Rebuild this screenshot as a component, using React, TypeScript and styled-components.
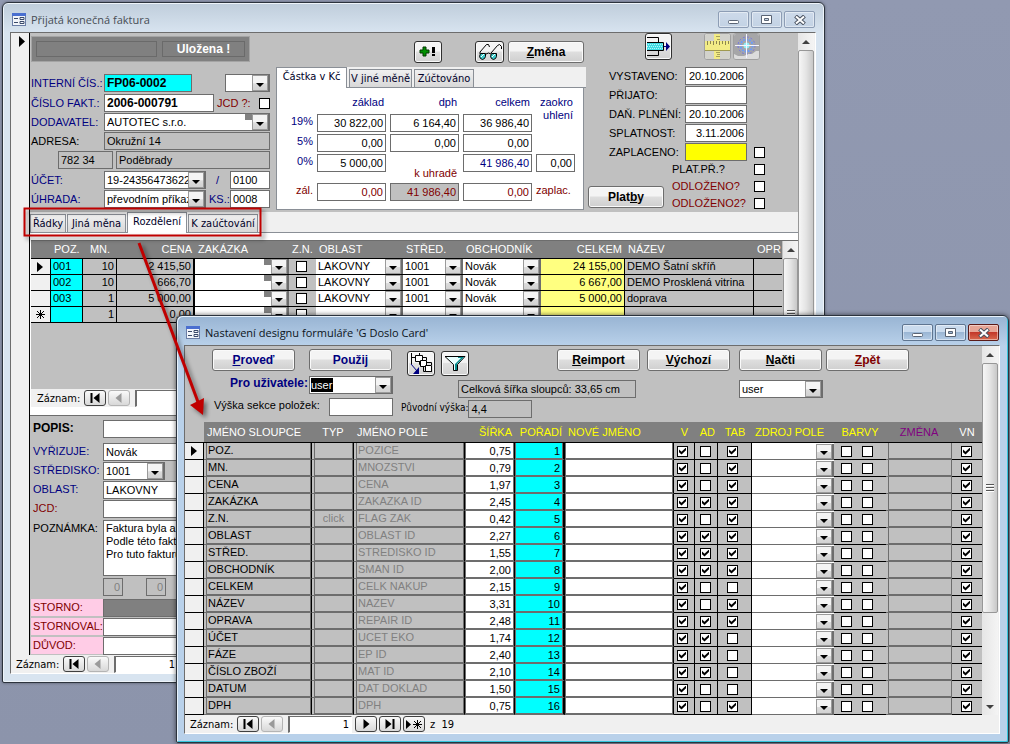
import React from 'react';
import styled, { createGlobalStyle, css } from 'styled-components';

const UI = '"Liberation Sans", Arial, sans-serif';
const TAHOMA = '"DejaVu Sans Condensed", "Noto Sans", sans-serif';
const TITLE = '"Open Sans", "Noto Sans", sans-serif';

const c = {
  face: '#c0c0c0',
  light: '#f0f0f0',
  line: '#6d6d6d',
  dark: '#808080',
  navy: '#000080',
  maroon: '#800000',
  purple: '#800080',
  cyan: '#00ffff',
  yellow: '#ffff00',
  paleYellow: '#ffff80',
  pink: '#ffcce6',
};

const GlobalStyle = createGlobalStyle`
  *, *::before, *::after { box-sizing: border-box; }
  body { margin: 0; background: #9199b1; font-family: ${UI}; font-size: 11px; line-height: 15px; color: #000; }
  input, select, textarea, button { font: inherit; color: inherit; margin: 0; border-radius: 0; }
`;

/* ---------- windows ---------- */

const Desktop = styled.main`
  position: relative;
  min-height: 100vh;
  overflow: hidden;
  background: linear-gradient(#9199b1, #8c94ab);
`;

const WindowFrame = styled.section<{ $active?: boolean }>`
  position: absolute;
  display: flex;
  flex-direction: column;
  border: 1px solid #2c333d;
  border-radius: 6px 6px 2px 2px;
  padding: 0 8px 8px 7px;
  ${(p) =>
    p.$active
      ? css`
          top: 315px;
          left: 176px;
          right: 1px;
          background: linear-gradient(#98b4d3, #b9d1ea 30px);
          box-shadow: inset 1px 1px 0 #e8f2fb, inset -1px -1px 0 #35c5dd, 0 0 5px rgba(0, 0, 0, 0.6);
        `
      : css`
          top: 2px;
          left: 2px;
          right: 185px;
          background: linear-gradient(#bfcddb, #d8e4f0 30px);
          box-shadow: inset 0 0 0 1px #eef4fa, 0 0 3px rgba(0, 0, 0, 0.4);
        `}
`;

const TitleBar = styled.header`
  display: flex;
  align-items: center;
  height: 29px;
  padding: 4px 1px 0 2px;
  gap: 5px;
`;

const Title = styled.h1<{ $active?: boolean }>`
  flex: 1;
  margin: 0;
  font: 400 11px/16px ${TITLE};
  color: ${(p) => (p.$active ? '#0c1420' : '#474d55')};
`;

const CaptionButtons = styled.div`
  display: flex;
  gap: 2px;
`;

const CaptionButton = styled.button<{ $tone: 'plain' | 'active' | 'close' }>`
  display: flex;
  align-items: center;
  justify-content: center;
  width: 31px;
  height: 17px;
  padding: 0;
  border-radius: 2px;
  border: 1px solid ${(p) => ({ plain: '#8d9db5', active: '#5f7590', close: '#5a1a18' })[p.$tone]};
  background: ${(p) =>
    ({
      plain: 'linear-gradient(#cddaea, #c3d2e4)',
      active: 'linear-gradient(#cadbee 45%, #9bb6d4 50%, #b4cce6)',
      close: 'linear-gradient(#e6a596 45%, #c3382a 50%, #d8694e)',
    })[p.$tone]};
  box-shadow: inset 0 0 0 1px rgba(255, 255, 255, 0.45);
`;

const Client = styled.div`
  display: flex;
  flex-direction: column;
  padding-right: 1px;
  border: 1px solid #fff;
  border-top-color: ${c.line};
  border-left-color: ${c.line};
  background: ${c.light};
`;

const FormArea = styled.div`
  display: flex;
  align-items: stretch;
`;

const RecordSelector = styled.div`
  flex: 0 0 19px;
  border-right: 1px solid #000;
  background: ${c.light};
  padding: 3px 0 0 8px;
`;

const FormBody = styled.div`
  flex: 1;
  min-width: 0;
  background: ${c.face};
`;

/* ---------- scroll bar ---------- */

const ScrollTrack = styled.div<{ $w: number }>`
  flex: 0 0 ${(p) => p.$w}px;
  display: flex;
  flex-direction: column;
  background: linear-gradient(90deg, #e6e6e6, #f4f4f4);
`;

const ScrollEnd = styled.div`
  height: 17px;
  display: flex;
  align-items: center;
  justify-content: center;
`;

const ScrollThumb = styled.div<{ $grow: number }>`
  flex: ${(p) => p.$grow} 1 0;
  display: flex;
  align-items: center;
  justify-content: center;
  border: 1px solid #979797;
  border-radius: 2px;
  background: linear-gradient(90deg, #f6f6f6, #e4e4e4 50%, #c8c8c8);
`;

const ScrollRest = styled.div<{ $grow: number }>`
  flex: ${(p) => p.$grow} 1 0;
`;

function ScrollBar({ thumb, rest, width = 16, grip = true }: { thumb: number; rest: number; width?: number; grip?: boolean }) {
  return (
    <ScrollTrack $w={width}>
      <ScrollEnd>
        <svg width="8" height="4"><path d="M0 4L4 0L8 4Z" fill="#404040" /></svg>
      </ScrollEnd>
      <ScrollThumb $grow={thumb}>
        {grip && (
          <svg width="8" height="9">
            <path d="M0 1.5H8M0 4.5H8M0 7.5H8" stroke="#555" />
            <path d="M0 2.5H8M0 5.5H8M0 8.5H8" stroke="#fff" />
          </svg>
        )}
      </ScrollThumb>
      <ScrollRest $grow={rest} />
      <ScrollEnd>
        <svg width="8" height="4"><path d="M0 0L4 4L8 0Z" fill="#404040" /></svg>
      </ScrollEnd>
    </ScrollTrack>
  );
}

/* ---------- controls ---------- */

type FieldProps = { $w?: number; $bg?: string; $color?: string; $right?: boolean; $bold?: boolean };

const fieldCss = css<FieldProps>`
  ${(p) => (p.$w ? `flex: 0 0 ${p.$w}px; width: ${p.$w}px;` : 'flex: 1; width: 100%;')}
  min-width: 0;
  height: 18px;
  padding: 0 2px;
  border: 1px solid ${c.line};
  background: ${(p) => p.$bg ?? '#fff'};
  color: ${(p) => p.$color ?? '#000'};
  text-align: ${(p) => (p.$right ? 'right' : 'left')};
  ${(p) => p.$bold && `font: 700 12px/15px ${UI};`}
`;

const Field = styled.input<FieldProps>`${fieldCss}`;

const Locked = styled.output<FieldProps>`
  ${fieldCss}
  display: block;
  line-height: 16px;
  white-space: nowrap;
  overflow: hidden;
`;

const Memo = styled.textarea`
  flex: 1;
  min-width: 0;
  height: 56px;
  padding: 1px 2px;
  border: 1px solid ${c.line};
  line-height: 13px;
  white-space: pre;
  resize: none;
  overflow: hidden;
`;

const Check = styled.input.attrs({ type: 'checkbox' })`
  appearance: none;
  flex: none;
  display: block;
  width: 11px;
  height: 11px;
  border: 1px solid #000;
  background: #fff;
  &:checked::after {
    content: '';
    display: block;
    width: 7px;
    height: 7px;
    margin: 1px;
    background: #000;
    clip-path: polygon(0 30%, 0 68%, 36% 100%, 100% 40%, 100% 0, 36% 60%);
  }
`;

const ComboBox = styled.span<{ $w?: number; $flat?: boolean }>`
  ${(p) => (p.$w ? `flex: 0 0 ${p.$w}px;` : 'flex: 1;')}
  display: flex;
  min-width: 0;
  height: ${(p) => (p.$flat ? 15 : 18)}px;
  border: 1px solid ${c.line};
  border-width: ${(p) => (p.$flat ? '0 2px 0 0' : '1px 2px 1px 1px')};
  background: #fff;
`;

const ComboSelect = styled.select`
  appearance: none;
  flex: 1;
  min-width: 0;
  width: 0;
  padding: 0 0 0 2px;
  border: 0;
  background: transparent;
  overflow: hidden;
`;

const ComboArrow = styled.span`
  flex: 0 0 16px;
  display: flex;
  align-items: center;
  justify-content: center;
  padding-top: 3px;
  border: 1px solid #fff;
  outline: 1px solid #9a9a9a;
  outline-offset: -1px;
  background: linear-gradient(#f4f4f4 50%, #dcdcdc 55%, #d2d2d2);
`;

const ComboMark = styled.span`
  flex: 0 0 7px;
  height: 6px;
  background: ${c.dark};
`;

const DownGlyph = () => (
  <svg width="8" height="4"><path d="M0 0H8L4 4Z" /></svg>
);

type ComboProps = { id?: string; label: string; value: string; width?: number; flat?: boolean; mark?: boolean };

function Combo({ id, label, value, width, flat, mark }: ComboProps) {
  return (
    <ComboBox $w={width} $flat={flat}>
      <ComboSelect id={id} aria-label={label} defaultValue={value}>
        <option>{value}</option>
      </ComboSelect>
      {mark && <ComboMark />}
      <ComboArrow><DownGlyph /></ComboArrow>
    </ComboBox>
  );
}

const HighlightInput = styled.input`
  flex: 0 0 22px;
  width: 22px;
  height: 14px;
  margin: 1px auto 0 1px;
  padding: 0;
  border: 0;
  background: #000;
  color: #fff;
`;

const PushButton = styled.button<{ $w: number; $color?: string }>`
  flex: 0 0 ${(p) => p.$w}px;
  height: 22px;
  padding: 0;
  border: 1px solid ${c.line};
  border-radius: 3px;
  background: linear-gradient(#f4f4f4 45%, #dedede 50%, #cfcfcf);
  box-shadow: inset 0 0 0 1px #fafafa;
  font: 700 12px/18px ${UI};
  color: ${(p) => p.$color ?? '#000'};
`;

const IconButton = styled.button<{ $w: number; $h: number; $off?: boolean }>`
  flex: 0 0 ${(p) => p.$w}px;
  height: ${(p) => p.$h}px;
  display: flex;
  align-items: center;
  justify-content: center;
  padding: 0;
  border: 1px solid ${(p) => (p.$off ? '#a0a0a0' : '#303030')};
  border-radius: 3px;
  background: linear-gradient(#f4f4f4 45%, #e0e0e0 50%, #d2d2d2);
  box-shadow: inset 0 0 0 1px #fafafa;
  overflow: hidden;
`;

/* ---------- record navigation ---------- */

const NavBar = styled.nav<{ $inset: number }>`
  display: flex;
  align-items: center;
  gap: 2px;
  height: 18px;
  padding-left: ${(p) => p.$inset}px;
  background: ${c.light};
  font: 11px/15px ${TAHOMA};
`;

const NavLabel = styled.label`
  width: 45px;
`;

const NavButton = styled.button<{ $off?: boolean }>`
  flex: 0 0 22px;
  height: 16px;
  display: flex;
  align-items: center;
  justify-content: center;
  padding: 0;
  border: 1px solid ${(p) => (p.$off ? '#b4b4b4' : '#404040')};
  border-radius: 3px;
  background: linear-gradient(#fafafa, #d8d8d8);
  color: ${(p) => (p.$off ? '#9a9a9a' : '#000')};
`;

const NavInput = styled.input`
  flex: 0 0 64px;
  width: 64px;
  height: 17px;
  margin: 0 1px 0 3px;
  padding: 0 2px;
  border: 1px solid #fff;
  border-top-color: ${c.line};
  border-left: 2px solid ${c.line};
  background: #fff;
  text-align: right;
`;

const NavTotal = styled.span`
  padding-left: 3px;
  white-space: pre;
`;

const navGlyph = {
  first: 'M1 0H3V10H1ZM10 0V10L4 5Z',
  prev: 'M8 0V10L2 5Z',
  next: 'M3 0V10L9 5Z',
  last: 'M1 0V10L7 5ZM8 0H10V10H8Z',
};

function NavGlyph({ d }: { d: string }) {
  return <svg width="12" height="10" viewBox="0 0 11 10"><path d={d} fill="currentColor" /></svg>;
}

function RecordNav({ id, inset, value, total }: { id: string; inset: number; value: string; total?: string }) {
  return (
    <NavBar $inset={inset} aria-label="Záznam">
      <NavLabel htmlFor={id}>Záznam:</NavLabel>
      <NavButton aria-label="První"><NavGlyph d={navGlyph.first} /></NavButton>
      <NavButton $off aria-label="Předchozí"><NavGlyph d={navGlyph.prev} /></NavButton>
      <NavInput id={id} defaultValue={value} />
      <NavButton aria-label="Další"><NavGlyph d={navGlyph.next} /></NavButton>
      <NavButton aria-label="Poslední"><NavGlyph d={navGlyph.last} /></NavButton>
      <NavButton aria-label="Nový">
        <svg width="17" height="9" viewBox="0 0 17 9">
          <path d="M0 0V9L5 4.5Z" />
          <path d="M11.5 0V9M7 4.5H16M8 1L15 8M15 1L8 8" stroke="#000" />
        </svg>
      </NavButton>
      {total && <NavTotal>{total}</NavTotal>}
    </NavBar>
  );
}

/* ---------- invoice header ---------- */

const InvoiceHeader = styled.div`
  display: flex;
  align-items: flex-start;
  height: 179px;
  background: ${c.face};
`;

const SupplierColumn = styled.div`
  flex: 0 0 240px;
  min-width: 0;
  padding: 3px 0 0 1px;
`;

const StatusPanel = styled.div`
  display: flex;
  gap: 5px;
  width: 219px;
  height: 26px;
  margin-bottom: 12px;
  padding: 4px;
  border: 1px solid #a4a4a4;
  background: ${c.dark};
`;

const StatusBox = styled.div<{ $w: number }>`
  flex: 0 0 ${(p) => p.$w}px;
  border: 1px solid #6a6a6a;
  color: #fff;
  text-align: center;
  font: 700 12px/14px ${UI};
`;

const Line = styled.div<{ $gap?: number }>`
  display: flex;
  align-items: center;
  gap: 3px;
  height: 18px;
  margin-bottom: ${(p) => p.$gap ?? 1}px;
`;

const Label = styled.label<{ $w?: number; $color?: string; $bold?: boolean }>`
  ${(p) => p.$w && `flex: 0 0 ${p.$w}px; min-width: 0;`}
  white-space: nowrap;
  color: ${(p) => p.$color ?? '#000'};
  ${(p) => p.$bold && `font: 700 12px/15px ${UI};`}
`;

const Spacer = styled.span<{ $w?: number }>`
  flex: ${(p) => (p.$w ? `0 0 ${p.$w}px` : '1')};
`;

const AmountColumn = styled.div`
  flex: 0 0 310px;
  min-width: 0;
  margin-left: 6px;
  padding-top: 8px;
`;

const ButtonRow = styled.div`
  display: flex;
  gap: 4px;
  height: 22px;
  margin-bottom: 4px;
  padding: 0 2px 0 138px;
`;

const TabStrip = styled.div<{ $h: number }>`
  display: flex;
  align-items: flex-end;
  gap: 2px;
  height: ${(p) => p.$h}px;
  border-bottom: 1px solid #8a8f96;
  background: ${c.light};
`;

const Tab = styled.button<{ $on?: boolean; $w: number }>`
  flex: 0 0 ${(p) => p.$w}px;
  height: ${(p) => (p.$on ? 21 : 18)}px;
  margin-bottom: ${(p) => (p.$on ? -1 : 0)}px;
  padding: 0 0 ${(p) => (p.$on ? 3 : 0)}px;
  border: 1px solid #8a8f96;
  border-bottom: 0;
  background: ${(p) => (p.$on ? '#fff' : 'linear-gradient(#f0f0f0, #d8d8d8)')};
  font: 11px/15px ${TAHOMA};
  color: #000028;
  white-space: nowrap;
`;

const FormTabs = styled(TabStrip)`
  gap: 1px;
`;

const AmountPanel = styled.div`
  display: grid;
  grid-template-columns: 36px repeat(3, 69px) 39px;
  grid-template-rows: 26px 18px 2px 18px 2px 18px 11px 18px;
  column-gap: 4px;
  height: 122px;
  margin-right: 2px;
  border: 1px solid #8a8f96;
  border-top: 0;
  background: #fff;
`;

const AmountHead = styled.span<{ $col: number }>`
  grid-area: 1 / ${(p) => p.$col};
  align-self: center;
  padding: 2px 2px 0 0;
  text-align: right;
  color: ${c.navy};
`;

const RoundingHead = styled.span`
  grid-area: 1 / 5 / 3 / 6;
  padding: 8px 2px 0 0;
  line-height: 13px;
  text-align: right;
  color: ${c.navy};
`;

const RateLabel = styled.span<{ $row: number; $color: string }>`
  grid-area: ${(p) => p.$row} / 1;
  text-align: right;
  color: ${(p) => p.$color};
`;

const ToPayLabel = styled.span`
  grid-area: 6 / 3 / 8 / 4;
  align-self: end;
  padding: 0 2px 2px;
  text-align: right;
  color: ${c.maroon};
`;

const PaidLabel = styled.span`
  grid-area: 8 / 5;
  color: ${c.maroon};
`;

const Amount = styled(Locked)<{ $row: number; $col: number }>`
  grid-area: ${(p) => p.$row} / ${(p) => p.$col};
`;

const DateColumn = styled.div`
  flex: 1;
  min-width: 0;
  padding-left: 2px;
`;

const ToolRow = styled.div`
  display: flex;
  gap: 2px;
  height: 27px;
  margin-bottom: 7px;
  padding-left: 57px;
`;

const DateLine = styled(Line)`
  padding-left: 21px;
  gap: 0;
`;

const PaymentArea = styled.div`
  display: flex;
  align-items: flex-end;
`;

const FlagList = styled.div`
  display: flex;
  flex-direction: column;
  padding-left: 8px;
`;

const Flag = styled.label<{ $color: string }>`
  display: flex;
  align-items: center;
  justify-content: space-between;
  width: 93px;
  height: 17px;
  color: ${(p) => p.$color};
`;

const PaymentButtonWrap = styled.div`
  display: flex;
  width: 76px;
  padding-bottom: 4px;
`;

/* ---------- invoice lines ---------- */

const TabPage = styled.div`
  padding: 7px 0 8px 1px;
  border-bottom: 1px solid ${c.line};
  background: #fff;
`;

const SubForm = styled.div`
  display: flex;
  height: 149px;
  border-top: 1px solid ${c.line};
  background: ${c.face};
`;

const GridHolder = styled.div`
  flex: 1;
  min-width: 0;
  margin-right: 1px;
`;

const Grid = styled.table`
  width: 100%;
  table-layout: fixed;
  border-collapse: separate;
  border-spacing: 0;
`;

const Th = styled.th<{ $color?: string; $align?: string; $bare?: boolean; $h: number }>`
  height: ${(p) => p.$h}px;
  padding: 0 3px;
  border-bottom: 1px solid #000;
  background: ${(p) => (p.$bare ? c.face : c.dark)};
  color: ${(p) => p.$color ?? '#fff'};
  font-weight: 400;
  text-align: ${(p) => p.$align ?? 'left'};
  white-space: nowrap;
  overflow: hidden;
`;

const Td = styled.td<{ $bg?: string; $h: number; $edge?: string; $align?: string; $color?: string; $under?: string }>`
  height: ${(p) => p.$h}px;
  padding: 0 2px;
  border-bottom: 1px solid ${(p) => p.$under ?? '#000'};
  border-right: ${(p) => p.$edge ?? '0'};
  background: ${(p) => p.$bg ?? c.face};
  color: ${(p) => p.$color ?? '#000'};
  text-align: ${(p) => p.$align ?? 'left'};
  line-height: ${(p) => p.$h - 1}px;
  white-space: nowrap;
  overflow: hidden;
`;

const FlushTd = styled(Td)`
  padding: 0;
`;

const MarkerTd = styled(Td)`
  line-height: 0;
`;

const CheckPair = styled.div<{ $left?: number }>`
  display: flex;
  gap: 10px;
  padding-left: ${(p) => p.$left ?? 7}px;
`;

const CellInput = styled.input<{ $bg?: string; $right?: boolean; $framed?: boolean }>`
  display: block;
  width: 100%;
  height: ${(p) => (p.$framed ? 16 : 15)}px;
  padding: 0 2px;
  border: 0 solid ${c.line};
  border-width: ${(p) => (p.$framed ? '0 1px 1px 1px' : '0')};
  background: ${(p) => p.$bg ?? 'transparent'};
  text-align: ${(p) => (p.$right ? 'right' : 'left')};
`;

const lineRows = [
  { poz: '001', mn: '10', cena: '2 415,50', celkem: '24 155,00', nazev: 'DEMO Šatní skříň' },
  { poz: '002', mn: '10', cena: '666,70', celkem: '6 667,00', nazev: 'DEMO Prosklená vitrina' },
  { poz: '003', mn: '1', cena: '5 000,00', celkem: '5 000,00', nazev: 'doprava' },
  { poz: '', mn: '1', cena: '0,00', celkem: '', nazev: '' },
];

const lineCols = [20, 32, 34, 78, 94, 27, 87, 60, 78, 84, 129];

function InvoiceLines() {
  const black = '1px solid #000';
  return (
    <Grid>
      <colgroup>
        {lineCols.map((w, i) => <col key={i} width={w} />)}
        <col />
      </colgroup>
      <thead>
        <tr>
          <Th $h={18} />
          <Th $h={18}>POZ.</Th>
          <Th $h={18} $align="center">MN.</Th>
          <Th $h={18} $align="right">CENA</Th>
          <Th $h={18}>ZAKÁZKA</Th>
          <Th $h={18}>Z.N.</Th>
          <Th $h={18}>OBLAST</Th>
          <Th $h={18}>STŘED.</Th>
          <Th $h={18}>OBCHODNÍK</Th>
          <Th $h={18} $align="right">CELKEM</Th>
          <Th $h={18}>NÁZEV</Th>
          <Th $h={18}>OPR</Th>
        </tr>
      </thead>
      <tbody>
        {lineRows.map((r, i) => (
          <tr key={i}>
            <MarkerTd $h={16} $bg={c.light} $edge={black} $align="center">
              {i === 0 && <svg width="7" height="10"><path d="M0 0V10L6 5Z" /></svg>}
              {i === 3 && (
                <svg width="9" height="9"><path d="M4.5 0V9M0 4.5H9M1 1L8 8M8 1L1 8" stroke="#000" /></svg>
              )}
            </MarkerTd>
            <FlushTd $h={16} $bg={c.cyan} $edge={black}>
              <CellInput aria-label="Pozice" defaultValue={r.poz} />
            </FlushTd>
            <Td $h={16} $edge={black} $align="right">{r.mn}</Td>
            <Td $h={16} $edge="2px solid #000" $align="right">{r.cena}</Td>
            <FlushTd $h={16} $bg="#fff">
              <Combo flat mark label="Zakázka" value="" />
            </FlushTd>
            <FlushTd $h={16}>
              <CheckPair><Check aria-label="Z.N." /></CheckPair>
            </FlushTd>
            <FlushTd $h={16}><Combo flat label="Oblast" value={i < 3 ? 'LAKOVNY' : ''} /></FlushTd>
            <FlushTd $h={16}><Combo flat label="Středisko" value={i < 3 ? '1001' : ''} /></FlushTd>
            <FlushTd $h={16}><Combo flat label="Obchodník" value={i < 3 ? 'Novák' : ''} /></FlushTd>
            <Td $h={16} $bg={c.paleYellow} $edge={black} $align="right">{r.celkem}</Td>
            <Td $h={16} $edge={black}>{r.nazev}</Td>
            <Td $h={16} />
          </tr>
        ))}
      </tbody>
    </Grid>
  );
}

/* ---------- invoice footer ---------- */

const InvoiceFooter = styled.div`
  padding: 4px 0 0 1px;
  background: ${c.face};
`;

const PinkLabel = styled(Label)`
  height: 17px;
  padding-left: 2px;
  background: ${c.pink};
  line-height: 17px;
`;

const FooterLine = styled(Line)`
  gap: 0;
  align-items: flex-start;
`;

const FooterLabel = styled(Label)`
  padding-left: 2px;
  line-height: 16px;
`;

const MemoLine = styled.div`
  display: flex;
  margin: 2px 0;
`;

/* ---------- icons ---------- */

function FormIcon() {
  return (
    <svg width="14" height="13" viewBox="0 0 14 13">
      <rect x="0.5" y="0.5" width="13" height="12" fill="#f2f5fa" stroke="#6b7ea6" />
      <rect x="0" y="0" width="14" height="3" fill="#4a6fd0" />
      <path d="M2 5.5H6M2 9.5H6" stroke="#3a4a6a" />
      <path d="M8 4.5H12V6.5H8ZM8 8.5H12V10.5H8Z" fill="none" stroke="#3a4a6a" />
    </svg>
  );
}

function Caption({ active }: { active?: boolean }) {
  const tone = active ? 'active' : 'plain';
  return (
    <CaptionButtons>
      <CaptionButton $tone={tone} aria-label="Minimalizovat">
        <svg width="12" height="10"><rect x="0.5" y="5.5" width="10" height="3" rx="1" fill="#fff" stroke="#5a6474" /></svg>
      </CaptionButton>
      <CaptionButton $tone={tone} aria-label="Maximalizovat">
        <svg width="11" height="9">
          <path d="M0.5 0.5H10.5V8.5H0.5ZM3.5 3.5V5.5H7.5V3.5Z" fill="#fff" fillRule="evenodd" stroke="#5a6474" />
        </svg>
      </CaptionButton>
      <CaptionButton $tone={active ? 'close' : 'plain'} aria-label="Zavřít">
        <svg width="12" height="10" viewBox="0 0 12 10">
          <path d="M1.5 1L10.5 9M10.5 1L1.5 9" stroke="#4a5260" strokeWidth="4" />
          <path d="M2 1.5L10 8.5M10 1.5L2 8.5" stroke="#fff" strokeWidth="2" />
        </svg>
      </CaptionButton>
    </CaptionButtons>
  );
}

const PlusIcon = () => (
  <svg width="18" height="12">
    <path d="M4 1H7V4H10V7H7V10H4V7H1V4H4Z" fill="#009000" stroke="#003800" />
    <path d="M13 1H16V7H13ZM13 8H16V10H13Z" />
  </svg>
);

const GlassesIcon = () => (
  <svg width="26" height="18" viewBox="0 0 26 18" fill="none" stroke="#000">
    <path d="M3 11V9L9.5 1.5L11.5 1.5L12.5 4M14 10L20.5 2.5L22.5 1.5L24.5 3.5V6" />
    <path d="M9 11Q11.5 9 14 11" />
    <path d="M3.5 10.5H8.5V13.5L7.5 15.5L5.5 16.5L3.5 15.5L2.5 13.5Z" fill="#3cc8c8" />
    <path d="M14.5 10.5H19.5V13.5L18.5 15.5L16.5 16.5L14.5 15.5L13.5 13.5Z" fill="#3cc8c8" />
    <path d="M4 14L7 11M15 14L18 11" stroke="#fff" />
  </svg>
);

const SplitIcon = () => (
  <svg width="25" height="23" viewBox="0 0 25 23">
    <path d="M1 2.5H12.5V8M1 20.5H12.5V15" fill="none" stroke="#000" />
    <rect x="1" y="8" width="16" height="7" fill="#40dce4" />
    <path d="M2 9.5H17M1 11.5H17M2 13.5H17" stroke="#b4f4f8" strokeDasharray="1 1" />
    <path d="M1 7.5H17.5V15.5H1" fill="none" stroke="#000" />
    <path d="M18 11H20V7L24 11.5L20 16V12H18Z" fill={c.navy} />
  </svg>
);

const RulerIcon = () => (
  <svg width="25" height="25" viewBox="0 0 25 25">
    <rect width="25" height="25" fill="#d2d2cc" />
    <path d="M9 0H15V25H9Z" fill="#f2ec86" />
    <path d="M11 2.5H15M12 5.5H15M11 18.5H15M12 20.5H15M11 22.5H15" stroke="#a8a25a" />
    <rect y="7" width="25" height="9" fill="#f2ec86" />
    <path d="M0 16.5H25" stroke="#a09a50" />
    <path d="M2.5 7V11M5.5 7V10M8.5 7V11M11.5 7V10M14.5 7V11M17.5 7V10M20.5 7V11M23.5 7V10" stroke="#8c8650" />
  </svg>
);

const StarIcon = () => (
  <svg width="25" height="25" viewBox="0 0 25 25">
    <rect width="25" height="25" fill="#a6a6a8" />
    <path d="M0 20L4 22H10L14 20H18L22 17H25V25H0Z" fill="#dcdcdc" />
    <circle cx="12.5" cy="11.5" r="8.5" fill="none" stroke="#7474e4" strokeDasharray="2 2" />
    <circle cx="12.5" cy="11.5" r="6" fill="none" stroke="#6c9cf8" strokeWidth="2" strokeDasharray="2 1" />
    <circle cx="12.5" cy="11.5" r="3" fill="#90f0f8" />
    <path d="M12.5 0V24M1 11.5H25" stroke="#f4f4ff" />
  </svg>
);

const CascadeIcon = () => (
  <svg width="24" height="22" viewBox="0 0 24 22" fill="none" stroke="#000">
    <path d="M2.5 0V11M2.5 4.5H6M10.5 0V2.5" />
    <path d="M6.5 2.5H13.5V8.5H6.5Z" fill="#fff" />
    <path d="M13.5 4.5H17.5V7M10.5 8.5V11.5H14" />
    <path d="M11.5 7.5H17.5V13.5H11.5Z" fill="#fff" />
    <path d="M17.5 9.5H22.5V12M14.5 13.5V18.5H23" />
    <path d="M16.5 12.5H22.5V18.5H16.5Z" fill="#fff" />
    <path d="M2 11L8 18" stroke={c.navy} />
    <path d="M10 14V21H4Z" fill={c.navy} stroke="none" />
  </svg>
);

const FunnelIcon = () => (
  <svg width="22" height="17" viewBox="0 0 22 17">
    <path d="M1 1.5H21L13.5 9.5V15.5H9.5V9.5Z" fill="#e8ffff" stroke="#000" />
    <path d="M14 2H20L13 9V15H11V9L17 3H14Z" fill="#008888" />
  </svg>
);

/* ---------- design dialog ---------- */

const DialogHead = styled.div`
  height: 76px;
  padding-top: 3px;
  background: ${c.face};
`;

const HeadRow = styled.div<{ $h: number; $left: number }>`
  display: flex;
  align-items: flex-start;
  height: ${(p) => p.$h}px;
  padding-left: ${(p) => p.$left}px;
`;

const Low = styled.div<{ $ml: number; $w: number }>`
  display: flex;
  align-self: flex-end;
  flex: 0 0 ${(p) => p.$w}px;
  margin-left: ${(p) => p.$ml}px;
`;

const SmallLabel = styled.span`
  flex: 0 0 67px;
  margin-left: 8px;
  font: 10px/20px ${TAHOMA};
  white-space: nowrap;
`;

const Boxed = styled.div<{ $color?: string; $align?: string }>`
  height: 16px;
  margin-left: 2px;
  padding: 0 1px;
  border: 1px solid ${c.line};
  border-top: 0;
  line-height: 15px;
  color: ${(p) => p.$color ?? '#000'};
  text-align: ${(p) => p.$align ?? 'left'};
`;

const columnRows: [string, string, string, string, boolean, boolean][] = [
  ['POZ.', '', 'POZICE', '0,75', false, true],
  ['MN.', '', 'MNOZSTVI', '0,79', false, true],
  ['CENA', '', 'CENA', '1,97', false, true],
  ['ZAKÁZKA', '', 'ZAKAZKA ID', '2,45', true, true],
  ['Z.N.', 'click', 'FLAG ZAK', '0,42', false, true],
  ['OBLAST', '', 'OBLAST ID', '2,27', true, true],
  ['STŘED.', '', 'STREDISKO ID', '1,55', true, true],
  ['OBCHODNÍK', '', 'SMAN ID', '2,00', true, true],
  ['CELKEM', '', 'CELK NAKUP', '2,15', false, false],
  ['NÁZEV', '', 'NAZEV', '3,31', false, true],
  ['OPRAVA', '', 'REPAIR ID', '2,48', true, true],
  ['ÚČET', '', 'UCET EKO', '1,74', true, false],
  ['FÁZE', '', 'EP ID', '2,40', true, false],
  ['ČÍSLO ZBOŽÍ', '', 'MAT ID', '2,10', true, false],
  ['DATUM', '', 'DAT DOKLAD', '1,50', false, false],
  ['DPH', '', 'DPH', '0,75', false, true],
];

const designCols = [19, 108, 42, 111, 50, 50, 109, 21, 23, 34, 82, 52, 66];

function DesignGrid() {
  const black = '1px solid #000';
  const thick = '2px solid #000';
  const h = 21;
  const yellow = c.yellow;
  return (
    <Grid>
      <colgroup>
        {designCols.map((w, i) => <col key={i} width={w} />)}
        <col />
      </colgroup>
      <thead>
        <tr>
          <Th $h={h} $bare />
          <Th $h={h}>JMÉNO SLOUPCE</Th>
          <Th $h={h} $align="center">TYP</Th>
          <Th $h={h}>JMÉNO POLE</Th>
          <Th $h={h} $color={yellow} $align="right">ŠÍŘKA</Th>
          <Th $h={h} $color={yellow} $align="right">POŘADÍ</Th>
          <Th $h={h} $color={yellow}>NOVÉ JMÉNO</Th>
          <Th $h={h} $color={yellow} $align="center">V</Th>
          <Th $h={h} $color={yellow} $align="right">AD</Th>
          <Th $h={h} $color={yellow} $align="center">TAB</Th>
          <Th $h={h} $color={yellow}>ZDROJ POLE</Th>
          <Th $h={h} $color={yellow} $align="center">BARVY</Th>
          <Th $h={h} $color={c.purple} $align="center">ZMĚNA</Th>
          <Th $h={h} $align="center">VN</Th>
        </tr>
      </thead>
      <tbody>
        {columnRows.map(([name, typ, field, width, ad, tab], i) => (
          <tr key={name}>
            <MarkerTd $h={17} $bg={c.light} $edge={black} $align="center">
              {i === 0 && <svg width="7" height="10"><path d="M0 0V10L6 5Z" /></svg>}
            </MarkerTd>
            <FlushTd $h={17} $edge={black} $under={c.line}><Boxed>{name}</Boxed></FlushTd>
            <FlushTd $h={17} $edge={black} $under={c.line}><Boxed $color={c.dark} $align="center">{typ}</Boxed></FlushTd>
            <FlushTd $h={17} $edge={black} $under={c.line}><Boxed $color={c.dark}>{field}</Boxed></FlushTd>
            <FlushTd $h={17} $edge={black} $under={c.line}>
              <CellInput $framed aria-label="Šířka" $bg="#fff" $right defaultValue={width} />
            </FlushTd>
            <FlushTd $h={17} $edge={thick} $under={c.line}>
              <CellInput $framed aria-label="Pořadí" $bg={c.cyan} $right defaultValue={i + 1} />
            </FlushTd>
            <FlushTd $h={17} $edge={black} $under={c.line}>
              <CellInput $framed aria-label="Nové jméno" $bg="#fff" />
            </FlushTd>
            <FlushTd $h={17} $edge={black}><CheckPair $left={3}><Check aria-label="V" defaultChecked /></CheckPair></FlushTd>
            <FlushTd $h={17} $edge={black}><CheckPair $left={5}><Check aria-label="AD" defaultChecked={ad} /></CheckPair></FlushTd>
            <FlushTd $h={17} $edge={black}><CheckPair $left={9}><Check aria-label="TAB" defaultChecked={tab} /></CheckPair></FlushTd>
            <FlushTd $h={17} $bg="#fff" $under={c.line}><Combo flat label="Zdroj pole" value="" /></FlushTd>
            <FlushTd $h={17}>
              <CheckPair><Check aria-label="Barva písma" /><Check aria-label="Barva pozadí" /></CheckPair>
            </FlushTd>
            <FlushTd $h={17} $under={c.line}><Boxed /></FlushTd>
            <FlushTd $h={17}><CheckPair $left={9}><Check aria-label="VN" defaultChecked /></CheckPair></FlushTd>
          </tr>
        ))}
      </tbody>
    </Grid>
  );
}

/* ---------- annotations drawn over both windows ---------- */

const Annotation = styled.svg`
  position: absolute;
  top: 200px;
  left: 16px;
  pointer-events: none;
  filter: drop-shadow(3px 3px 2px rgba(0, 0, 0, 0.45));
`;

function InvoiceWindow() {
  return (
    <WindowFrame>
      <TitleBar>
        <FormIcon />
        <Title>Přijatá konečná faktura</Title>
        <Caption />
      </TitleBar>
      <Client>
        <FormArea>
          <RecordSelector>
            <svg width="7" height="11"><path d="M0 0V11L6 5.5Z" /></svg>
          </RecordSelector>
          <FormBody>
            <InvoiceHeader>
              <SupplierColumn>
                <StatusPanel>
                  <StatusBox $w={121} />
                  <StatusBox $w={83}>Uložena !</StatusBox>
                </StatusPanel>
                <Line $gap={2}>
                  <Label $w={70} $color={c.navy} htmlFor="interni">INTERNÍ ČÍS.:</Label>
                  <Field id="interni" $w={88} $bg={c.cyan} $bold defaultValue="FP06-0002" />
                  <Spacer />
                  <Combo label="Řada" value="" width={45} />
                </Line>
                <Line>
                  <Label $w={70} $color={c.navy} htmlFor="cislo">ČÍSLO FAKT.:</Label>
                  <Field id="cislo" $w={110} $bold defaultValue="2006-000791" />
                  <Label $color={c.maroon} htmlFor="jcd">JCD ?:</Label>
                  <Spacer />
                  <Check id="jcd" />
                </Line>
                <Line>
                  <Label $w={70} $color={c.navy} htmlFor="dodavatel">DODAVATEL:</Label>
                  <Combo id="dodavatel" label="Dodavatel" value="AUTOTEC s.r.o." mark />
                </Line>
                <Line>
                  <Label $w={70} as="span">ADRESA:</Label>
                  <Locked $bg={c.face}>Okružní 14</Locked>
                </Line>
                <Line $gap={2}>
                  <Spacer $w={24} />
                  <Locked $w={55} $bg={c.face}>782 34</Locked>
                  <Locked $bg={c.face}>Poděbrady</Locked>
                </Line>
                <Line>
                  <Label $w={70} $color={c.navy} htmlFor="ucet">ÚČET:</Label>
                  <Combo id="ucet" label="Účet" value="19-24356473622" width={102} />
                  <Spacer />
                  <Label $w={11} $color={c.navy} htmlFor="banka">/</Label>
                  <Field id="banka" $w={40} defaultValue="0100" />
                </Line>
                <Line>
                  <Label $w={70} $color={c.navy} htmlFor="uhrada">ÚHRADA:</Label>
                  <Combo id="uhrada" label="Úhrada" value="převodním příkazem" width={102} />
                  <Label $w={18} $color={c.navy} htmlFor="ks">KS.:</Label>
                  <Field id="ks" defaultValue="0008" />
                </Line>
              </SupplierColumn>

              <AmountColumn>
                <ButtonRow>
                  <IconButton $w={28} $h={22} aria-label="Přidat"><PlusIcon /></IconButton>
                  <Spacer />
                  <IconButton $w={29} $h={22} aria-label="Náhled"><GlassesIcon /></IconButton>
                  <PushButton $w={76}><u>Z</u>měna</PushButton>
                </ButtonRow>
                <TabStrip $h={21} role="tablist">
                  <Tab $w={71} $on role="tab">Částka v Kč</Tab>
                  <Tab $w={63} role="tab">V jiné měně</Tab>
                  <Tab $w={60} role="tab">Zúčtováno</Tab>
                </TabStrip>
                <AmountPanel>
                  <AmountHead $col={2}>základ</AmountHead>
                  <AmountHead $col={3}>dph</AmountHead>
                  <AmountHead $col={4}>celkem</AmountHead>
                  <RoundingHead>zaokro uhlení</RoundingHead>
                  <RateLabel $row={2} $color={c.navy}>19%</RateLabel>
                  <Amount $row={2} $col={2} $right>30 822,00</Amount>
                  <Amount $row={2} $col={3} $right>6 164,40</Amount>
                  <Amount $row={2} $col={4} $right>36 986,40</Amount>
                  <RateLabel $row={4} $color={c.navy}>5%</RateLabel>
                  <Amount $row={4} $col={2} $right>0,00</Amount>
                  <Amount $row={4} $col={3} $right>0,00</Amount>
                  <Amount $row={4} $col={4} $right>0,00</Amount>
                  <RateLabel $row={6} $color={c.navy}>0%</RateLabel>
                  <Amount $row={6} $col={2} $right>5 000,00</Amount>
                  <Amount $row={6} $col={4} $right $color={c.navy}>41 986,40</Amount>
                  <Amount $row={6} $col={5} $right>0,00</Amount>
                  <ToPayLabel>k uhradě</ToPayLabel>
                  <RateLabel $row={8} $color={c.maroon}>zál.</RateLabel>
                  <Amount $row={8} $col={2} $right $color={c.maroon}>0,00</Amount>
                  <Amount $row={8} $col={3} $right $color={c.maroon} $bg={c.face}>41 986,40</Amount>
                  <Amount $row={8} $col={4} $right $color={c.maroon}>0,00</Amount>
                  <PaidLabel>zaplac.</PaidLabel>
                </AmountPanel>
              </AmountColumn>

              <DateColumn>
                <ToolRow>
                  <IconButton $w={27} $h={27} aria-label="Rozdělit"><SplitIcon /></IconButton>
                  <Spacer $w={28} />
                  <IconButton $w={27} $h={27} $off aria-label="Pravítko"><RulerIcon /></IconButton>
                  <IconButton $w={27} $h={27} $off aria-label="Design"><StarIcon /></IconButton>
                </ToolRow>
                <DateLine>
                  <Label $w={76} htmlFor="vystaveno">VYSTAVENO:</Label>
                  <Field id="vystaveno" $w={62} $right defaultValue="20.10.2006" />
                </DateLine>
                <DateLine>
                  <Label $w={76} htmlFor="prijato">PŘIJATO:</Label>
                  <Field id="prijato" $w={62} $right />
                </DateLine>
                <DateLine>
                  <Label $w={76} htmlFor="plneni">DAŇ. PLNĚNÍ:</Label>
                  <Field id="plneni" $w={62} $right defaultValue="20.10.2006" />
                </DateLine>
                <DateLine>
                  <Label $w={76} htmlFor="splatnost">SPLATNOST:</Label>
                  <Field id="splatnost" $w={62} $right defaultValue="3.11.2006" />
                </DateLine>
                <DateLine $gap={0}>
                  <Label $w={76} htmlFor="zaplaceno">ZAPLACENO:</Label>
                  <Field id="zaplaceno" $w={62} $bg={c.yellow} />
                  <Spacer $w={7} />
                  <Check aria-label="Zaplaceno" />
                </DateLine>
                <PaymentArea>
                  <PaymentButtonWrap>
                    <PushButton $w={76}>Plat<u>b</u>y</PushButton>
                  </PaymentButtonWrap>
                  <FlagList>
                    <Flag $color="#000">PLAT.PŘ.? <Check /></Flag>
                    <Flag $color={c.maroon}>ODLOŽENO? <Check /></Flag>
                    <Flag $color={c.maroon}>ODLOŽENO2? <Check /></Flag>
                  </FlagList>
                </PaymentArea>
              </DateColumn>
            </InvoiceHeader>

            <FormTabs $h={21} role="tablist">
              <Tab $w={36} role="tab">Řádky</Tab>
              <Tab $w={59} role="tab">Jiná měna</Tab>
              <Tab $w={60} $on role="tab">Rozdělení</Tab>
              <Tab $w={70} role="tab">K zaúčtování</Tab>
            </FormTabs>
            <TabPage>
              <SubForm>
                <GridHolder><InvoiceLines /></GridHolder>
                <ScrollBar thumb={110} rest={3} width={15} />
              </SubForm>
              <RecordNav id="lineRecord" inset={6} value="" />
            </TabPage>

            <InvoiceFooter>
              <FooterLine $gap={5}>
                <FooterLabel $w={72} $bold htmlFor="popis">POPIS:</FooterLabel>
                <Field id="popis" />
              </FooterLine>
              <FooterLine>
                <FooterLabel $w={72} $color={c.navy} htmlFor="vyrizuje">VYŘIZUJE:</FooterLabel>
                <Field id="vyrizuje" defaultValue="Novák" />
              </FooterLine>
              <FooterLine>
                <FooterLabel $w={72} $color={c.navy} htmlFor="stredisko">STŘEDISKO:</FooterLabel>
                <Combo id="stredisko" label="Středisko" value="1001" width={62} />
              </FooterLine>
              <FooterLine>
                <FooterLabel $w={72} $color={c.navy} htmlFor="oblast">OBLAST:</FooterLabel>
                <Field id="oblast" defaultValue="LAKOVNY" />
              </FooterLine>
              <FooterLine>
                <FooterLabel $w={72} $color={c.maroon} htmlFor="jcd2">JCD:</FooterLabel>
                <Field id="jcd2" />
              </FooterLine>
              <MemoLine>
                <FooterLabel $w={72} htmlFor="poznamka">POZNÁMKA:</FooterLabel>
                <Memo
                  id="poznamka"
                  defaultValue={'Faktura byla automaticky\nPodle této faktury\nPro tuto fakturu'}
                />
              </MemoLine>
              <FooterLine $gap={3}>
                <Spacer $w={72} />
                <Locked $w={20} $bg={c.face} $color={c.dark} $right>0</Locked>
                <Spacer $w={23} />
                <Locked $w={20} $bg={c.face} $color={c.dark} $right>0</Locked>
              </FooterLine>
              <FooterLine>
                <PinkLabel $w={72} $color={c.maroon} htmlFor="storno">STORNO:</PinkLabel>
                <Field id="storno" $bg={c.dark} />
              </FooterLine>
              <FooterLine>
                <PinkLabel $w={72} $color={c.maroon} htmlFor="stornoval">STORNOVAL:</PinkLabel>
                <Field id="stornoval" />
              </FooterLine>
              <FooterLine $gap={0}>
                <PinkLabel $w={72} $color={c.maroon} htmlFor="duvod">DŮVOD:</PinkLabel>
                <Field id="duvod" />
              </FooterLine>
            </InvoiceFooter>
          </FormBody>
          <ScrollBar thumb={500} rest={87} grip={false} />
        </FormArea>
        <RecordNav id="invoiceRecord" inset={5} value="1" />
      </Client>
    </WindowFrame>
  );
}

function DesignWindow() {
  return (
    <WindowFrame $active>
      <TitleBar>
        <FormIcon />
        <Title $active>Nastavení designu formuláře 'G Doslo Card'</Title>
        <Caption active />
      </TitleBar>
      <Client>
        <FormArea>
          <FormBody>
            <DialogHead>
              <HeadRow $h={27} $left={27}>
                <PushButton $w={83} $color={c.navy}><u>P</u>roveď</PushButton>
                <Spacer $w={14} />
                <PushButton $w={83} $color={c.navy}>Použij</PushButton>
                <Low $ml={15} $w={28}><IconButton $w={28} $h={25} aria-label="Kaskáda"><CascadeIcon /></IconButton></Low>
                <Low $ml={6} $w={28}><IconButton $w={28} $h={25} aria-label="Filtr"><FunnelIcon /></IconButton></Low>
                <Spacer $w={88} />
                <PushButton $w={83}><u>R</u>eimport</PushButton>
                <Spacer $w={7} />
                <PushButton $w={83}><u>V</u>ýchozí</PushButton>
                <Spacer $w={9} />
                <PushButton $w={83}><u>N</u>ačti</PushButton>
                <Spacer $w={4} />
                <PushButton $w={83} $color={c.maroon}><u>Z</u>pět</PushButton>
              </HeadRow>
              <HeadRow $h={22} $left={45}>
                <Label $w={79} $bold $color={c.navy} htmlFor="uzivatel">Pro uživatele:</Label>
                <ComboBox $w={84}>
                  <HighlightInput id="uzivatel" defaultValue="user" />
                  <ComboArrow><DownGlyph /></ComboArrow>
                </ComboBox>
                <Low $ml={65} $w={178}><Locked $bg={c.face}>Celková šířka sloupců: 33,65 cm</Locked></Low>
                <Low $ml={103} $w={84}><Combo label="Uživatel" value="user" /></Low>
              </HeadRow>
              <HeadRow $h={20} $left={29}>
                <Label $w={115} htmlFor="vyska">Výška sekce položek:</Label>
                <Field id="vyska" $w={64} />
                <SmallLabel>Původní výška:</SmallLabel>
                <Low $ml={0} $w={64}><Locked $bg={c.face}>4,4</Locked></Low>
              </HeadRow>
            </DialogHead>
            <DesignGrid />
          </FormBody>
          <ScrollBar thumb={249} rest={86} />
        </FormArea>
        <RecordNav id="designRecord" inset={5} value="1" total="z  19" />
      </Client>
    </WindowFrame>
  );
}

export default function App() {
  return (
    <>
      <GlobalStyle />
      <Desktop>
        <InvoiceWindow />
        <DesignWindow />
        <Annotation width="260" height="230" aria-hidden="true">
          <rect x="8.5" y="8.5" width="236" height="27" fill="none" stroke="#c00000" strokeWidth="2" />
          <path d="M123 43L182 202" stroke="#c00000" strokeWidth="3" />
          <path d="M187 215L174 205L188 198Z" fill="#c00000" />
        </Annotation>
      </Desktop>
    </>
  );
}
